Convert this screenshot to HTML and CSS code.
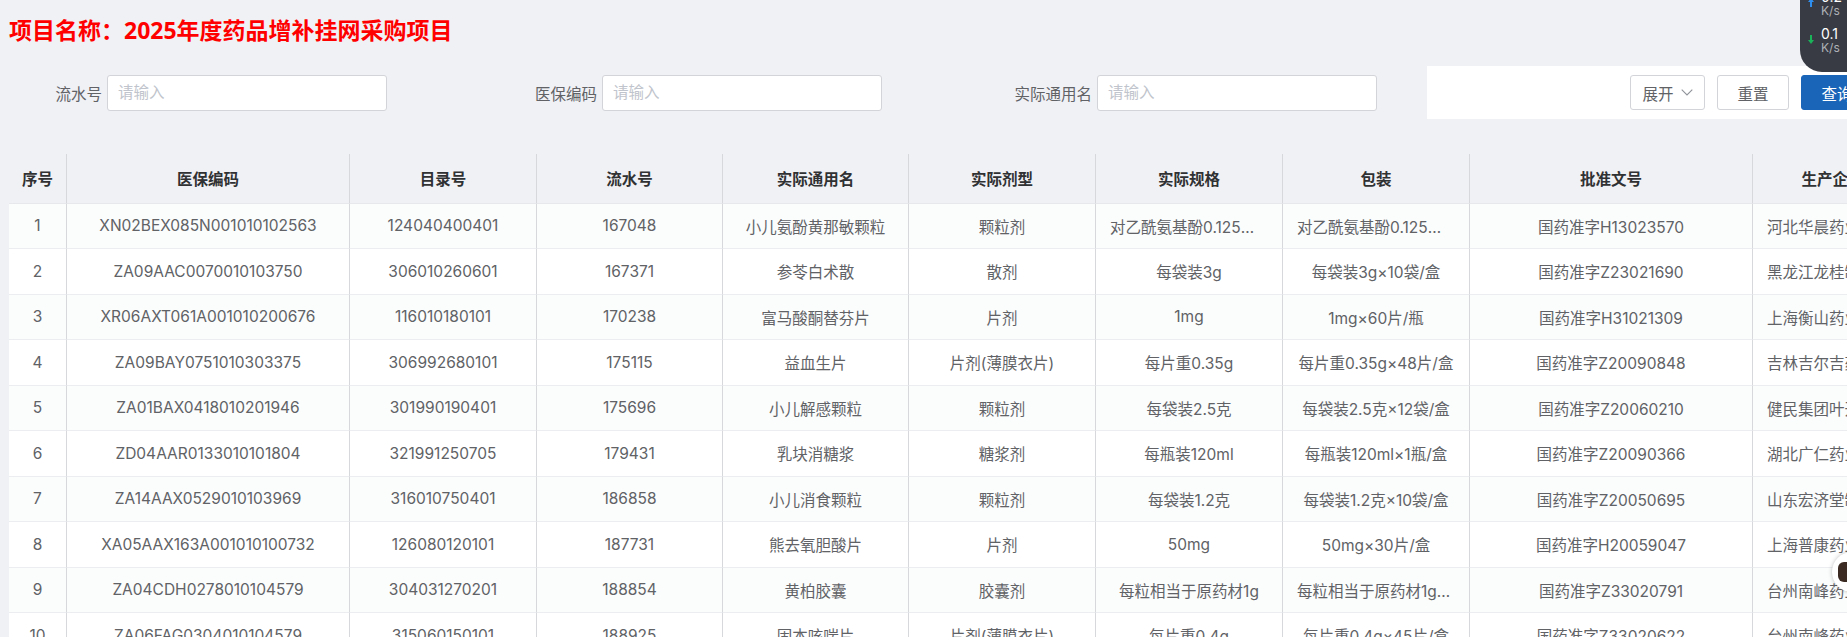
FILE: index.html
```html
<!doctype html>
<html lang="zh-CN">
  <head>
    <meta charset="utf-8"/>
    <title>药品增补挂网采购项目</title>
    <link rel="stylesheet" href="styles.css">
  </head>
  <body>
    <div class="page">
      <h1 class="title">项目名称：2025年度药品增补挂网采购项目</h1>

      <form class="search">
        <div class="search__item">
          <label class="search__label">流水号</label>
          <input class="search__input" placeholder="请输入"/>
        </div>
        <div class="search__item">
          <label class="search__label">医保编码</label>
          <input class="search__input" placeholder="请输入"/>
        </div>
        <div class="search__item">
          <label class="search__label">实际通用名</label>
          <input class="search__input" placeholder="请输入"/>
        </div>
        <div class="search__actions">
          <button type="button" class="btn btn_expand">
            展开
            <svg class="btn__icon" width="12" height="7" viewBox="0 0 12 7"><polyline points="0.7,0.7 6,6 11.3,0.7" fill="none" stroke="#909399" stroke-width="1.1"/></svg>
          </button>
          <button type="reset" class="btn">重置</button>
          <button type="button" class="btn btn_primary">查询</button>
        </div>
      </form>

      <table class="table">
        <colgroup>
          <col style="width: 57px">
          <col style="width: 283px">
          <col style="width: 187px">
          <col style="width: 186px">
          <col style="width: 186px">
          <col style="width: 187px">
          <col style="width: 187px">
          <col style="width: 187px">
          <col style="width: 283px">
          <col style="width: 160px">
        </colgroup>
        <thead>
          <tr>
            <th>序号</th>
            <th>医保编码</th>
            <th>目录号</th>
            <th>流水号</th>
            <th>实际通用名</th>
            <th>实际剂型</th>
            <th>实际规格</th>
            <th>包装</th>
            <th>批准文号</th>
            <th>生产企业</th>
          </tr>
        </thead>
        <tbody>
          <tr>
            <td>1</td>
            <td>XN02BEX085N001010102563</td>
            <td>124040400401</td>
            <td>167048</td>
            <td>小儿氨酚黄那敏颗粒</td>
            <td>颗粒剂</td>
            <td>对乙酰氨基酚0.125克，人工牛黄5毫克，马来酸氯苯那敏0.5毫克</td>
            <td>对乙酰氨基酚0.125克，人工牛黄5毫克×10袋/盒</td>
            <td>国药准字H13023570</td>
            <td>河北华晨药业有限责任公司</td>
          </tr>
          <tr>
            <td>2</td>
            <td>ZA09AAC0070010103750</td>
            <td>306010260601</td>
            <td>167371</td>
            <td>参苓白术散</td>
            <td>散剂</td>
            <td>每袋装3g</td>
            <td>每袋装3g×10袋/盒</td>
            <td>国药准字Z23021690</td>
            <td>黑龙江龙桂制药有限公司</td>
          </tr>
          <tr>
            <td>3</td>
            <td>XR06AXT061A001010200676</td>
            <td>116010180101</td>
            <td>170238</td>
            <td>富马酸酮替芬片</td>
            <td>片剂</td>
            <td>1mg</td>
            <td>1mg×60片/瓶</td>
            <td>国药准字H31021309</td>
            <td>上海衡山药业有限公司</td>
          </tr>
          <tr>
            <td>4</td>
            <td>ZA09BAY0751010303375</td>
            <td>306992680101</td>
            <td>175115</td>
            <td>益血生片</td>
            <td>片剂(薄膜衣片)</td>
            <td>每片重0.35g</td>
            <td>每片重0.35g×48片/盒</td>
            <td>国药准字Z20090848</td>
            <td>吉林吉尔吉药业有限公司</td>
          </tr>
          <tr>
            <td>5</td>
            <td>ZA01BAX0418010201946</td>
            <td>301990190401</td>
            <td>175696</td>
            <td>小儿解感颗粒</td>
            <td>颗粒剂</td>
            <td>每袋装2.5克</td>
            <td>每袋装2.5克×12袋/盒</td>
            <td>国药准字Z20060210</td>
            <td>健民集团叶开泰国药(随州)有限公司</td>
          </tr>
          <tr>
            <td>6</td>
            <td>ZD04AAR0133010101804</td>
            <td>321991250705</td>
            <td>179431</td>
            <td>乳块消糖浆</td>
            <td>糖浆剂</td>
            <td>每瓶装120ml</td>
            <td>每瓶装120ml×1瓶/盒</td>
            <td>国药准字Z20090366</td>
            <td>湖北广仁药业有限公司</td>
          </tr>
          <tr>
            <td>7</td>
            <td>ZA14AAX0529010103969</td>
            <td>316010750401</td>
            <td>186858</td>
            <td>小儿消食颗粒</td>
            <td>颗粒剂</td>
            <td>每袋装1.2克</td>
            <td>每袋装1.2克×10袋/盒</td>
            <td>国药准字Z20050695</td>
            <td>山东宏济堂制药集团股份有限公司</td>
          </tr>
          <tr>
            <td>8</td>
            <td>XA05AAX163A001010100732</td>
            <td>126080120101</td>
            <td>187731</td>
            <td>熊去氧胆酸片</td>
            <td>片剂</td>
            <td>50mg</td>
            <td>50mg×30片/盒</td>
            <td>国药准字H20059047</td>
            <td>上海普康药业有限公司</td>
          </tr>
          <tr>
            <td>9</td>
            <td>ZA04CDH0278010104579</td>
            <td>304031270201</td>
            <td>188854</td>
            <td>黄柏胶囊</td>
            <td>胶囊剂</td>
            <td>每粒相当于原药材1g</td>
            <td>每粒相当于原药材1g×12粒×2板/盒</td>
            <td>国药准字Z33020791</td>
            <td>台州南峰药业有限公司</td>
          </tr>
          <tr>
            <td>10</td>
            <td>ZA06FAG0304010104579</td>
            <td>315060150101</td>
            <td>188925</td>
            <td>固本咳喘片</td>
            <td>片剂(薄膜衣片)</td>
            <td>每片重0.4g</td>
            <td>每片重0.4g×45片/盒</td>
            <td>国药准字Z33020622</td>
            <td>台州南峰药业有限公司</td>
          </tr>
        </tbody>
      </table>
    </div>

    <div class="netspeed">
      <div class="netspeed__row">
        <svg class="netspeed__arrow" width="6" height="9" viewBox="0 0 6 9"><path d="M3 0 L6 4 L4 4 L4 9 L2 9 L2 4 L0 4 Z" fill="#2f8ff0"/></svg>
        <div class="netspeed__text">
          <div class="netspeed__value">0.2</div>
          <div class="netspeed__unit">K/s</div>
        </div>
      </div>
      <div class="netspeed__row">
        <svg class="netspeed__arrow" width="6" height="9" viewBox="0 0 6 9"><path d="M3 9 L6 5 L4 5 L4 0 L2 0 L2 5 L0 5 Z" fill="#1bb35a"/></svg>
        <div class="netspeed__text">
          <div class="netspeed__value">0.1</div>
          <div class="netspeed__unit">K/s</div>
        </div>
      </div>
    </div>

    <div class="assistant">
      <span class="assistant__dot"></span>
    </div>
  </body>
</html>
```

FILE: styles.css
```css
html,
body {
  margin: 0;
  overflow: hidden;
}
body {
  font-family: Inter, "Noto Sans CJK SC", sans-serif;
  font-size: 15.5px;
  color: #606266;
  background-color: #f0f1f5;
}
.page {
  width: 1920px;
  padding-left: 9px;
}
.title {
  margin: 15px 0 0;
  font-family: "Noto Sans", "Noto Sans CJK SC", sans-serif;
  font-size: 23px;
  line-height: 30px;
  font-weight: 700;
  color: #ff0000;
}
.search {
  display: flex;
  align-items: center;
  height: 53px;
  margin: 21px 0 0;
}
.search__item {
  display: flex;
  align-items: center;
}
.search__item + .search__item {
  margin-left: 117px;
}
.search__label {
  width: 93px;
  padding-right: 5px;
  text-align: right;
  white-space: nowrap;
  color: #606266;
}
.search__input {
  box-sizing: border-box;
  width: 280px;
  height: 36px;
  padding: 0 10px;
  border: 1px solid #d2d4d9;
  border-radius: 3px;
  background-color: #fff;
  font: inherit;
  color: #606266;
  outline: none;
}
.search__input::placeholder {
  color: #c0c4cc;
}
.search__actions {
  box-sizing: border-box;
  display: flex;
  align-items: center;
  justify-content: flex-end;
  gap: 12px;
  width: 460px;
  height: 53px;
  margin-left: 50px;
  padding-right: 14px;
  background-color: #fff;
}
.btn {
  box-sizing: border-box;
  display: flex;
  align-items: center;
  justify-content: center;
  width: 72px;
  height: 35px;
  padding: 0;
  border: 1px solid #d2d4d9;
  border-radius: 3px;
  background-color: #fff;
  font: inherit;
  color: #606266;
  cursor: pointer;
}
.btn_expand {
  width: 75px;
  gap: 7px;
}
.btn_primary {
  border-color: #1a65b8;
  background-color: #1a65b8;
  color: #fff;
}
.table {
  width: 1903px;
  margin-top: 35px;
  table-layout: fixed;
  border-collapse: separate;
  border-spacing: 0;
}
.table th,
.table td {
  box-sizing: border-box;
  white-space: nowrap;
  overflow: hidden;
  text-overflow: ellipsis;
  text-align: center;
  border-left: 1px solid #d6d8dc;
}
.table th:first-child,
.table td:first-child {
  border-left: none;
}
.table th {
  height: 49.5px;
  padding: 0 10px;
  font-weight: 700;
  color: #303133;
  border-bottom: 1px solid #e6e8ec;
}
.table td {
  height: 45.5px;
  padding: 0 14px;
  background-color: #fff;
  border-bottom: 1px solid #ebedf0;
}
.table tbody tr:nth-child(odd) td {
  background-color: #fbfcfc;
}
.table td:first-child {
  padding: 0;
}
.netspeed {
  position: absolute;
  top: -18px;
  right: -12px;
  box-sizing: border-box;
  width: 59px;
  padding: 6px 0 18px 8px;
  border-radius: 0 0 0 22px;
  background-color: #383b43;
  display: flex;
  flex-direction: column;
  gap: 8px;
}
.netspeed__row {
  display: flex;
  align-items: center;
  gap: 7px;
}
.netspeed__value {
  font-size: 14px;
  line-height: 17px;
  color: #fff;
}
.netspeed__unit {
  font-size: 12px;
  line-height: 12px;
  color: #aeb1b7;
}
.assistant {
  position: absolute;
  top: 552px;
  left: 1832px;
  width: 40px;
  height: 40px;
  border-radius: 50%;
  background-color: #fff;
  box-shadow: 0 0 4px rgba(0, 0, 0, 0.25);
}
.assistant__dot {
  position: absolute;
  top: 10px;
  left: 6px;
  width: 12px;
  height: 20px;
  border-radius: 6px 2px 2px 6px;
  background-color: #3b2a22;
}
```
